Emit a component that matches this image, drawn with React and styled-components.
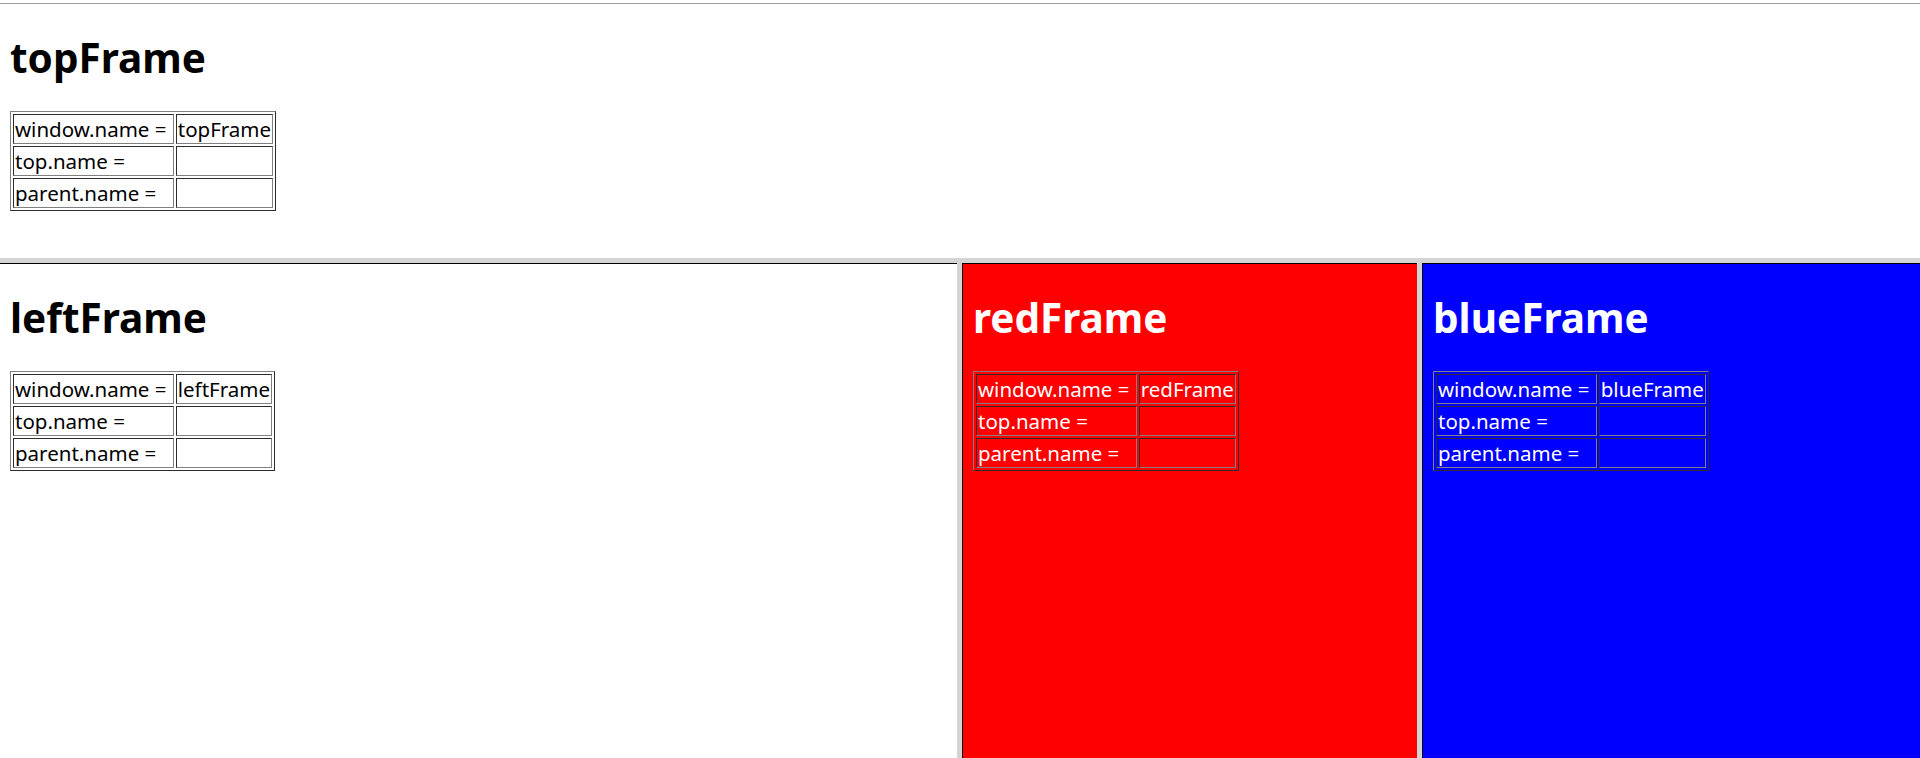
import styled, { createGlobalStyle } from 'styled-components';

const frames = [
  { name: 'leftFrame', width: '957px', bg: '#ffffff', fg: '#000000', edge: false },
  { name: 'redFrame', width: '455px', bg: '#ff0000', fg: '#ffffff', edge: true },
  { name: 'blueFrame', width: 'auto', bg: '#0000ff', fg: '#ffffff', edge: true, grow: true },
];

function NameTable({ name }) {
  return (
    <NameGrid>
      <tbody>
        <tr>
          <Cell>window.name =&nbsp;</Cell>
          <Cell>{name}</Cell>
        </tr>
        <tr>
          <Cell>top.name =</Cell>
          <Cell></Cell>
        </tr>
        <tr>
          <Cell>parent.name =</Cell>
          <Cell></Cell>
        </tr>
      </tbody>
    </NameGrid>
  );
}

function App() {
  return (
    <>
      <GlobalStyle />
      <Window>
        <TopFrame>
          <Heading>topFrame</Heading>
          <NameTable name="topFrame" />
        </TopFrame>
        <RowBorder />
        <BottomRow>
          {frames.map((f, i) => (
            <FrameSlot key={f.name} $grow={f.grow}>
              {i > 0 && <ColBorder />}
              <Frame $width={f.width} $bg={f.bg} $fg={f.fg} $edge={f.edge} $grow={f.grow}>
                <Heading>{f.name}</Heading>
                <NameTable name={f.name} />
              </Frame>
            </FrameSlot>
          ))}
        </BottomRow>
      </Window>
    </>
  );
}

const GlobalStyle = createGlobalStyle`
  html, body {
    margin: 0;
    height: 100%;
    overflow: hidden;
    background: #ffffff;
  }
  #root {
    height: 100%;
  }
`;

// whole window, split like a frameset
const Window = styled.div`
  height: 758px;
  display: flex;
  flex-direction: column;
  padding-top: 3px;
  box-sizing: border-box;
  font-family: "Noto Sans", "Open Sans", "Noto Sans CJK SC", sans-serif;
`;

const TopFrame = styled.section`
  height: 255px;
  flex: none;
  border-top: 1px solid #a0a0a0;
  box-sizing: border-box;
  padding: 0 10px;
  overflow: hidden;
  background: #ffffff;
  color: #000000;
`;

// frameset borders
const RowBorder = styled.div`
  height: 5px;
  flex: none;
  background: #d4d4d4;
`;

const ColBorder = styled.div`
  width: 5px;
  flex: none;
  background: #d4d4d4;
`;

const BottomRow = styled.div`
  flex: 1;
  min-height: 0;
  display: flex;
`;

const FrameSlot = styled.div`
  display: flex;
  flex: ${(p) => (p.$grow ? '1' : 'none')};
`;

const Frame = styled.section`
  width: ${(p) => p.$width};
  flex: ${(p) => (p.$grow ? '1' : 'none')};
  box-sizing: border-box;
  border-top: 1px solid #000000;
  border-left: ${(p) => (p.$edge ? '1px solid #000000' : 'none')};
  padding: 0 10px;
  overflow: hidden;
  background: ${(p) => p.$bg};
  color: ${(p) => p.$fg};
`;

const Heading = styled.h1`
  font-size: 40.5px;
  font-weight: bold;
  line-height: 53px;
  margin: 26.8px 0;
`;

const NameGrid = styled.table`
  border: 1px outset gray;
  border-spacing: 2.5px;
  font-size: 20.5px;
  line-height: 26px;
`;

const Cell = styled.td`
  border: 1px inset gray;
  padding: 1px;
  white-space: nowrap;
  height: 26px;
`;

export default App;
